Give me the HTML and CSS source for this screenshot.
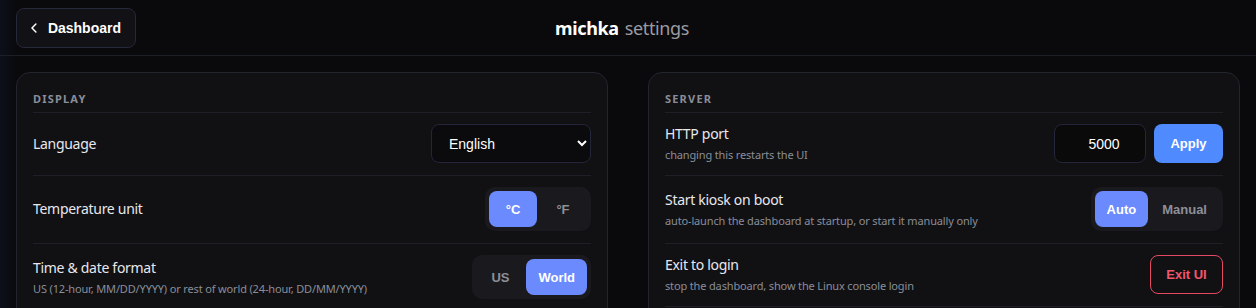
FILE: index.html
```html
<!DOCTYPE html>
<html lang="en">
<head>
    <meta charset="UTF-8">
    <meta name="viewport" content="width=device-width, initial-scale=1.0">
    <title>michka settings</title>
    <link rel="stylesheet" href="styles.css">
</head>
<body>
    <header class="topbar">
        <a href="#" class="back">
            <svg width="6" height="10" viewBox="0 0 6 10"><path d="M5 1 L1 5 L5 9" fill="none" stroke="#fff" stroke-width="1.5" stroke-linecap="round" stroke-linejoin="round"/></svg>
            Dashboard
        </a>
        <div class="title"><b>michka</b> <span>settings</span></div>
        <div class="spacer"></div>
    </header>

    <main class="grid">
        <!-- Display settings -->
        <section class="card">
            <h2>Display</h2>
            <div class="row">
                <div class="label">Language</div>
                <select class="select">
                    <option>English</option>
                    <option>Français</option>
                </select>
            </div>
            <div class="row">
                <div class="label">Temperature unit</div>
                <div class="seg">
                    <button class="on">°C</button>
                    <button>°F</button>
                </div>
            </div>
            <div class="row">
                <div>
                    <div class="label">Time &amp; date format</div>
                    <div class="hint">US (12-hour, MM/DD/YYYY) or rest of world (24-hour, DD/MM/YYYY)</div>
                </div>
                <div class="seg">
                    <button>US</button>
                    <button class="on">World</button>
                </div>
            </div>
        </section>

        <!-- Server settings -->
        <section class="card">
            <h2>Server</h2>
            <div class="row">
                <div>
                    <div class="label">HTTP port</div>
                    <div class="hint">changing this restarts the UI</div>
                </div>
                <div class="controls">
                    <input class="port" type="text" value="5000">
                    <button class="apply">Apply</button>
                </div>
            </div>
            <div class="row">
                <div>
                    <div class="label">Start kiosk on boot</div>
                    <div class="hint">auto-launch the dashboard at startup, or start it manually only</div>
                </div>
                <div class="seg">
                    <button class="on">Auto</button>
                    <button>Manual</button>
                </div>
            </div>
            <div class="row">
                <div>
                    <div class="label">Exit to login</div>
                    <div class="hint">stop the dashboard, show the Linux console login</div>
                </div>
                <button class="exit">Exit UI</button>
            </div>
        </section>
    </main>
</body>
</html>
```

FILE: styles.css
```css
body {
    margin: 0;
    padding: 0;
    font-family: "Segoe UI", "Noto Sans", sans-serif;
    color: #e8e8ec;
    background-color: #0a0a0c;
    background-image: linear-gradient(to right, #0c101b 0px, #0a0a0c 16px);
    height: 308px;
    overflow: hidden;
}

.topbar {
    display: flex;
    align-items: center;
    padding: 8px 16px 7px;
    border-bottom: 1px solid #1d1f28;
}

.back {
    box-sizing: border-box;
    display: flex;
    align-items: center;
    gap: 11px;
    width: 120px;
    height: 40px;
    padding: 0 14px;
    background-color: #121216;
    border: 1px solid #252838;
    border-radius: 8px;
    color: #fff;
    text-decoration: none;
    font-family: "Liberation Sans", Arial, sans-serif;
    font-weight: bold;
    font-size: 14px;
}

.title {
    flex: 1;
    text-align: center;
    font-size: 18px;
    letter-spacing: -0.4px;
}

.title b {
    color: #fff;
}

.title span {
    color: #9a9ba4;
    margin-left: 2px;
}

.spacer {
    width: 132px;
}

.grid {
    display: grid;
    grid-template-columns: 1fr 1fr;
    gap: 40px;
    padding: 16px;
}

.card {
    background-color: #111114;
    border: 1px solid #22242f;
    border-radius: 14px;
    padding: 16px 16px 16px;
}

.card h2 {
    margin: 0;
    padding: 4px 0 7px;
    font-size: 11px;
    line-height: 12px;
    font-weight: bold;
    letter-spacing: 1.2px;
    text-transform: uppercase;
    color: #8a8d98;
    border-bottom: 1px solid #1f2027;
}

.row {
    display: flex;
    align-items: center;
    justify-content: space-between;
    padding: 11px 0 12px;
    border-bottom: 1px solid #1f2027;
}

.label {
    font-size: 14px;
    line-height: 18px;
    letter-spacing: -0.3px;
    color: #e8e8ec;
}

.hint {
    margin-top: 4px;
    font-size: 11px;
    line-height: 15px;
    letter-spacing: -0.15px;
    color: #8a8d98;
}

button {
    font-family: "Liberation Sans", Arial, sans-serif;
    font-weight: bold;
    font-size: 13px;
    border: none;
    cursor: pointer;
    outline: none;
}

.select {
    width: 160px;
    height: 39px;
    padding: 0 6px 0 13px;
    background-color: #0b0b0d;
    color: #fff;
    border: 1px solid #23263a;
    border-radius: 8px;
    font-family: "Liberation Sans", Arial, sans-serif;
    font-size: 14px;
    color-scheme: dark;
}

.seg {
    display: flex;
    gap: 2px;
    padding: 4px;
    background-color: #1a1a1e;
    border-radius: 10px;
}

.seg button {
    min-width: 48px;
    height: 36px;
    padding: 0 12px;
    background: none;
    color: #8d8f99;
    border-radius: 8px;
}

.seg button.on {
    background-color: #6b8afd;
    color: #fff;
}

.controls {
    display: flex;
    gap: 8px;
}

.port {
    box-sizing: border-box;
    width: 92px;
    height: 39px;
    padding: 0 0 0 8px;
    background-color: #0a0a0b;
    border: 1px solid #23263a;
    border-radius: 8px;
    color: #fff;
    text-align: center;
    font-family: "Liberation Sans", Arial, sans-serif;
    font-size: 14px;
}

.apply {
    width: 69px;
    height: 39px;
    background-color: #4f8bff;
    color: #fff;
    border-radius: 8px;
}

.exit {
    width: 73px;
    height: 39px;
    background: none;
    border: 1px solid #e24a62;
    border-radius: 8px;
    color: #f2566d;
}
```
